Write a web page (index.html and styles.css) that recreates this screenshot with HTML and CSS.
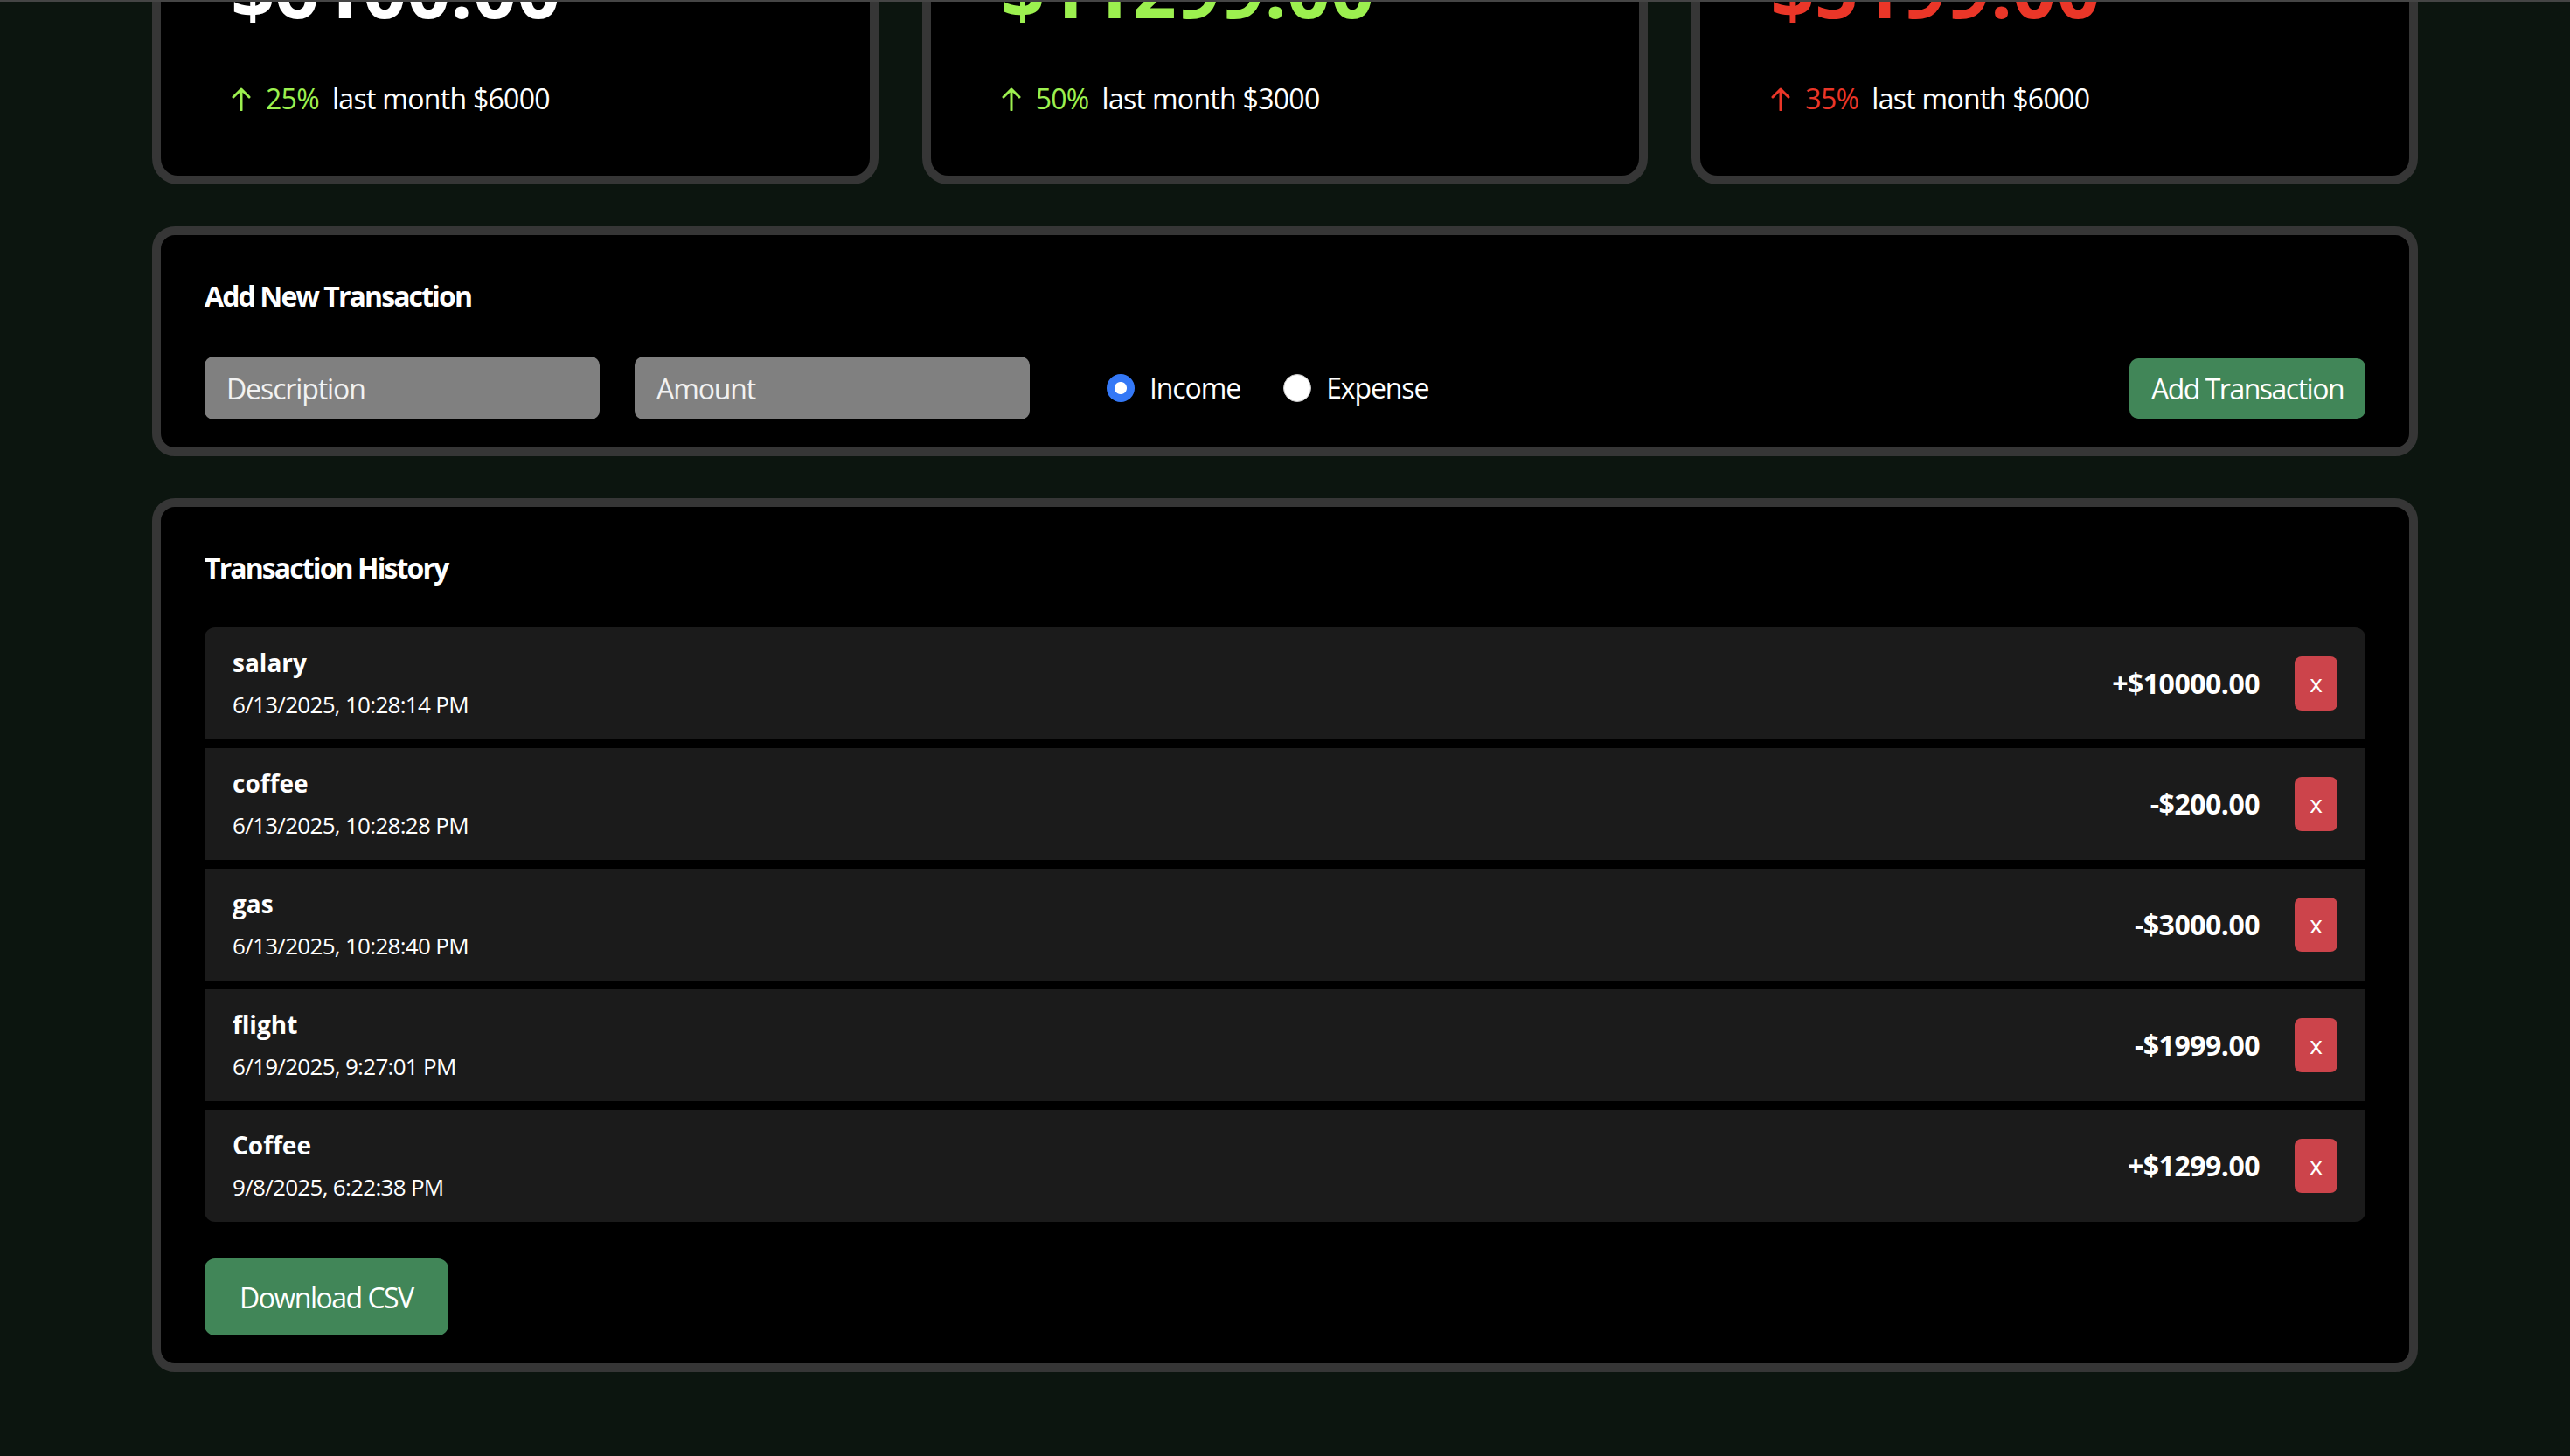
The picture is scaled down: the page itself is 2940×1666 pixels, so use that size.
FILE: index.html
```html
<!DOCTYPE html>
<html lang="en">
<head>
<meta charset="utf-8">
<title>Expense Tracker</title>
<link rel="stylesheet" href="styles.css">
</head>
<body>
<div class="viewport">
  <main class="page">
    <section class="stats">
      <div class="stat-card">
        <div class="stat-value">$6100.00</div>
        <div class="stat-trend">
          <svg class="trend-icon up-green" viewBox="0 0 24 28" width="24" height="28"><path d="M12 27V3M3 12l9-9 9 9" fill="none" stroke="currentColor" stroke-width="3" stroke-linecap="round" stroke-linejoin="round"/></svg>
          <span class="pct pct-green">25%</span>
          <span class="trend-text">last month $6000</span>
        </div>
      </div>
      <div class="stat-card">
        <div class="stat-value value-green">$11299.00</div>
        <div class="stat-trend">
          <svg class="trend-icon up-green" viewBox="0 0 24 28" width="24" height="28"><path d="M12 27V3M3 12l9-9 9 9" fill="none" stroke="currentColor" stroke-width="3" stroke-linecap="round" stroke-linejoin="round"/></svg>
          <span class="pct pct-green">50%</span>
          <span class="trend-text">last month $3000</span>
        </div>
      </div>
      <div class="stat-card">
        <div class="stat-value value-red">$5199.00</div>
        <div class="stat-trend">
          <svg class="trend-icon up-red" viewBox="0 0 24 28" width="24" height="28"><path d="M12 27V3M3 12l9-9 9 9" fill="none" stroke="currentColor" stroke-width="3" stroke-linecap="round" stroke-linejoin="round"/></svg>
          <span class="pct pct-red">35%</span>
          <span class="trend-text">last month $6000</span>
        </div>
      </div>
    </section>

    <section class="panel form-panel">
      <h2 class="panel-title">Add New Transaction</h2>
      <form class="form-row">
        <input class="field" type="text" placeholder="Description">
        <input class="field" type="text" placeholder="Amount">
        <div class="radio-group">
          <label class="radio-label"><input class="radio" type="radio" name="type" checked> Income</label>
          <label class="radio-label"><input class="radio" type="radio" name="type"> Expense</label>
        </div>
        <button class="btn btn-green add-btn" type="button">Add Transaction</button>
      </form>
    </section>

    <section class="panel history-panel">
      <h2 class="panel-title">Transaction History</h2>
      <div class="tx-list">
        <div class="tx-row">
          <div class="tx-info"><div class="tx-name">salary</div><div class="tx-date">6/13/2025, 10:28:14 PM</div></div>
          <div class="tx-amount">+$10000.00</div>
          <button class="del-btn" type="button">x</button>
        </div>
        <div class="tx-row">
          <div class="tx-info"><div class="tx-name">coffee</div><div class="tx-date">6/13/2025, 10:28:28 PM</div></div>
          <div class="tx-amount">-$200.00</div>
          <button class="del-btn" type="button">x</button>
        </div>
        <div class="tx-row">
          <div class="tx-info"><div class="tx-name">gas</div><div class="tx-date">6/13/2025, 10:28:40 PM</div></div>
          <div class="tx-amount">-$3000.00</div>
          <button class="del-btn" type="button">x</button>
        </div>
        <div class="tx-row">
          <div class="tx-info"><div class="tx-name">flight</div><div class="tx-date">6/19/2025, 9:27:01 PM</div></div>
          <div class="tx-amount">-$1999.00</div>
          <button class="del-btn" type="button">x</button>
        </div>
        <div class="tx-row">
          <div class="tx-info"><div class="tx-name">Coffee</div><div class="tx-date">9/8/2025, 6:22:38 PM</div></div>
          <div class="tx-amount">+$1299.00</div>
          <button class="del-btn" type="button">x</button>
        </div>
      </div>
      <button class="btn btn-green csv-btn" type="button">Download CSV</button>
    </section>
  </main>
</div>
</body>
</html>
```

FILE: styles.css
```css
* { box-sizing: border-box; }

html, body {
  margin: 0;
  padding: 0;
}

body {
  background: #0c150f;
  border-top: 2px solid #454545;
  color: #ffffff;
  font-family: "Open Sans", "Noto Sans", sans-serif;
  font-size: 32px;
}

.viewport {
  height: 1664px;
  overflow: hidden;
}

.page {
  width: 2592px;
  margin: -133px auto 0;
  display: flex;
  flex-direction: column;
  gap: 48px;
}

/* stat cards */
.stats {
  display: grid;
  grid-template-columns: repeat(3, 1fr);
  gap: 50px;
}

.stat-card {
  background: #000;
  border: 10px solid #363636;
  border-radius: 30px;
  padding: 60px 80px 68px;
}

.stat-value {
  font-size: 88px;
  font-weight: 700;
  line-height: 96px;
  margin-bottom: 58px;
  color: #ffffff;
}

.value-green { color: #9cf04f; }
.value-red { color: #ea3628; }

.stat-trend {
  display: flex;
  align-items: center;
  line-height: 40px;
  font-size: 32px;
  letter-spacing: -0.7px;
}

.trend-icon {
  display: block;
  margin-right: 16px;
}

.up-green { color: #9cf04f; }
.up-red { color: #ea3628; }

.pct { margin-right: 15px; }
.pct-green { color: #9cf04f; }
.pct-red { color: #ea3628; }

.trend-text { color: #ffffff; }

/* panels */
.panel {
  background: #000;
  border: 10px solid #363636;
  border-radius: 26px;
}

.form-panel { padding: 50px 50px 32px; }
.history-panel { padding: 50px 50px 32px; }

.panel-title {
  margin: 0;
  font-size: 32px;
  line-height: 40px;
  font-weight: 700;
  letter-spacing: -1.9px;
}

.form-panel .panel-title { margin-bottom: 49px; }
.history-panel .panel-title { margin-bottom: 48px; }

.form-row {
  display: flex;
  align-items: center;
  margin: 0;
}

.field {
  width: 452px;
  height: 72px;
  border: none;
  border-radius: 10px;
  background: #808080;
  color: #fff;
  font-family: inherit;
  font-size: 32px;
  letter-spacing: -1.1px;
  padding: 0 25px;
  margin-right: 40px;
  outline: none;
}

.field::placeholder { color: #f2f2f2; opacity: 1; }

.radio-group {
  display: flex;
  align-items: center;
  gap: 49px;
  margin-left: 48px;
}

.radio-label {
  display: flex;
  align-items: center;
  gap: 17px;
  font-size: 32px;
  line-height: 40px;
  letter-spacing: -1.1px;
}

.radio {
  appearance: none;
  -webkit-appearance: none;
  margin: 0;
  width: 32px;
  height: 32px;
  border-radius: 50%;
  background: #ffffff;
  border: 1px solid #c8c8c8;
}

.radio:checked {
  border: none;
  background: radial-gradient(circle, #ffffff 0 6.5px, #3478f6 7.5px);
}

.btn {
  border: none;
  color: #fff;
  font-family: inherit;
  font-size: 32px;
  letter-spacing: -1.5px;
  cursor: pointer;
}

.btn-green { background: #418658; }

.add-btn {
  margin-left: auto;
  height: 69px;
  padding: 0 25px;
  border-radius: 10px;
}

/* transactions */
.tx-list {
  display: flex;
  flex-direction: column;
  gap: 10px;
  border-radius: 12px;
  overflow: hidden;
}

.tx-row {
  display: flex;
  align-items: center;
  height: 128px;
  padding: 20px 32px;
  background: #1b1b1b;
}

.tx-info {
  flex: 1;
  display: flex;
  flex-direction: column;
  gap: 8px;
}

.tx-name {
  font-size: 28px;
  font-weight: 700;
  line-height: 40px;
}

.tx-date {
  font-size: 26px;
  line-height: 40px;
  letter-spacing: -0.7px;
}

.tx-amount {
  font-size: 32px;
  font-weight: 700;
  line-height: 40px;
  letter-spacing: -0.5px;
}

.del-btn {
  margin-left: 40px;
  width: 49px;
  height: 62px;
  border: none;
  border-radius: 8px;
  background: #cc444b;
  color: #fff;
  font-family: inherit;
  font-size: 28px;
  line-height: 1;
  padding: 0 0 2px;
}

.csv-btn {
  margin-top: 42px;
  height: 88px;
  padding: 0 40px;
  border-radius: 12px;
}
```
